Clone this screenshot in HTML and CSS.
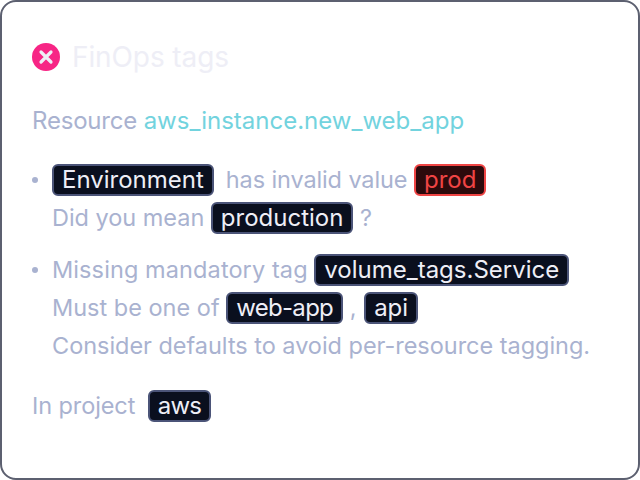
FILE: index.html
```html
<!DOCTYPE html>
<html>
<head>
    <title>FinOps tags</title>
    <link rel="stylesheet" href="styles.css">
</head>
<body>
    <div class="card">
        <div class="title-row">
            <svg class="status-icon" width="28" height="28" viewBox="0 0 28 28">
                <circle cx="14" cy="14" r="14" fill="#f72585"/>
                <path d="M9 9l10 10M19 9l-10 10" stroke="#eeeef6" stroke-width="3.2" stroke-linecap="round"/>
            </svg>
            <h1>FinOps tags</h1>
        </div>
        <p class="resource"><span class="resource-label">Resource </span><span class="link">aws_instance.new_web_app</span></p>
        <ul class="issues">
            <li>
                <div class="line"><span class="tag">Environment</span><span class="gap-left">has invalid value</span> <span class="tag tag-bad">prod</span></div>
                <div class="line"><span class="text-tight">Did you mean</span> <span class="tag">production</span> ?</div>
            </li>
            <li>
                <div class="line"><span class="text-wide">Missing mandatory tag</span> <span class="tag">volume_tags.Service</span></div>
                <div class="line">Must be one of <span class="tag tag-tight">web-app</span> , <span class="tag tag-api">api</span></div>
                <div class="line text-tight">Consider defaults to avoid per-resource tagging.</div>
            </li>
        </ul>
        <p class="project"><span class="project-label">In project</span> <span class="tag tag-project">aws</span></p>
    </div>
</body>
</html>
```

FILE: styles.css
```css
* {
    box-sizing: border-box;
}
html, body {
    margin: 0;
    padding: 0;
}
body {
    width: 640px;
    height: 480px;
    background: #fff;
    font-family: Inter, sans-serif;
    font-size: 24px;
    line-height: 38px;
    color: #a9b2d0;
    overflow: hidden;
}
.card {
    width: 640px;
    height: 480px;
    padding: 26px 30px 0;
    border: 2px solid #5c6070;
    border-radius: 16px;
}
.title-row {
    display: flex;
    align-items: center;
    gap: 12px;
}
.status-icon {
    flex: none;
}
h1 {
    margin: 0;
    font-size: 28px;
    line-height: 58px;
    font-weight: 400;
    letter-spacing: -0.1px;
    color: #eeeef6;
}
.resource {
    margin: 16px 0 0;
}
.resource-label {
    letter-spacing: -0.2px;
}
.link {
    color: #72d3de;
}
.issues {
    margin: 21px 0 0;
    padding: 0;
    list-style: none;
    font-size: 23.5px;
}
.issues li {
    position: relative;
    padding-left: 20px;
    margin-bottom: 14px;
}
.issues li::before {
    content: "";
    position: absolute;
    left: 0;
    top: 16px;
    width: 6px;
    height: 6px;
    border-radius: 50%;
    background: #a9b2d0;
}
.line {
    height: 38px;
    white-space: nowrap;
}
.text-tight {
    letter-spacing: -0.03px;
}
.text-wide {
    letter-spacing: 0.1px;
}
.tag {
    display: inline-block;
    height: 32px;
    padding: 0 8px;
    font-size: 24px;
    line-height: 28px;
    letter-spacing: 0;
    color: #eeeef6;
    background: #0a0f1e;
    border: 2px solid #4b5478;
    border-radius: 6px;
}
.tag-tight {
    letter-spacing: -0.7px;
}
.tag-api {
    margin-left: 1px;
}
.tag-bad {
    color: #ef4444;
    background: #2c0a0c;
    border-color: #ef4444;
}
.gap-left {
    margin-left: 12px;
    letter-spacing: -0.12px;
}
.project {
    margin: 22px 0 0;
    font-size: 23.5px;
}
.project-label {
    letter-spacing: -0.1px;
}
.tag-project {
    margin-left: 6px;
    letter-spacing: -0.9px;
}
```
